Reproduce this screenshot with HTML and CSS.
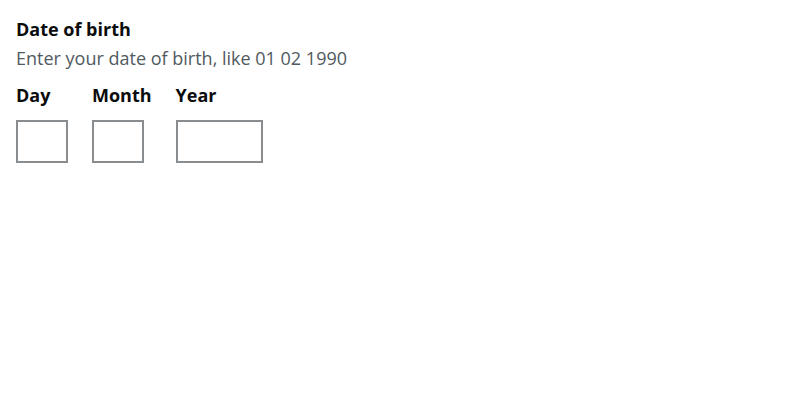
FILE: index.html
```
<!DOCTYPE html>
<html>
<head>
<meta charset="utf-8">
<link rel="stylesheet" href="styles.css">
</head>
<body>
<div class="form-group">
  <fieldset class="fieldset">
    <legend class="legend">Date of birth</legend>
    <div class="hint">Enter your date of birth, like 01 02 1990</div>
    <div class="date-input">
      <div class="item">
        <label class="label" for="d">Day</label>
        <input class="input w2" id="d" type="text">
      </div>
      <div class="item">
        <label class="label" for="m">Month</label>
        <input class="input w2" id="m" type="text">
      </div>
      <div class="item">
        <label class="label" for="y">Year</label>
        <input class="input w4" id="y" type="text">
      </div>
    </div>
  </fieldset>
</div>
</body>
</html>
```
FILE: styles.css
```
html, body {
  margin: 0;
  padding: 0;
  background: #fff;
}
body {
  font-family: "Open Sans", "Liberation Sans", sans-serif;
  color: #0b0c0c;
}
.form-group {
  padding: 17px 16px 16px;
}
.fieldset {
  margin: 0;
  padding: 0;
  border: 0;
  min-width: 0;
}
.legend {
  padding: 0;
  font-size: 18px;
  font-weight: 700;
  line-height: 25px;
  margin-bottom: 4px;
}
.hint {
  font-size: 18px;
  line-height: 25px;
  color: #505a5f;
  margin-bottom: 12px;
}
.date-input {
  display: flex;
}
.item {
  display: flex;
  flex-direction: column;
  align-items: flex-start;
  margin-right: 24px;
}
.label {
  font-size: 18px;
  font-weight: 700;
  line-height: 25px;
  margin-bottom: 12px;
}
.input {
  box-sizing: border-box;
  height: 43px;
  margin: 0;
  padding: 4px;
  border: 2px solid #8a8d8f;
  border-radius: 0;
  font: inherit;
  background: #fff;
}
.w2 { width: 52px; }
.w4 { width: 87px; }
```
